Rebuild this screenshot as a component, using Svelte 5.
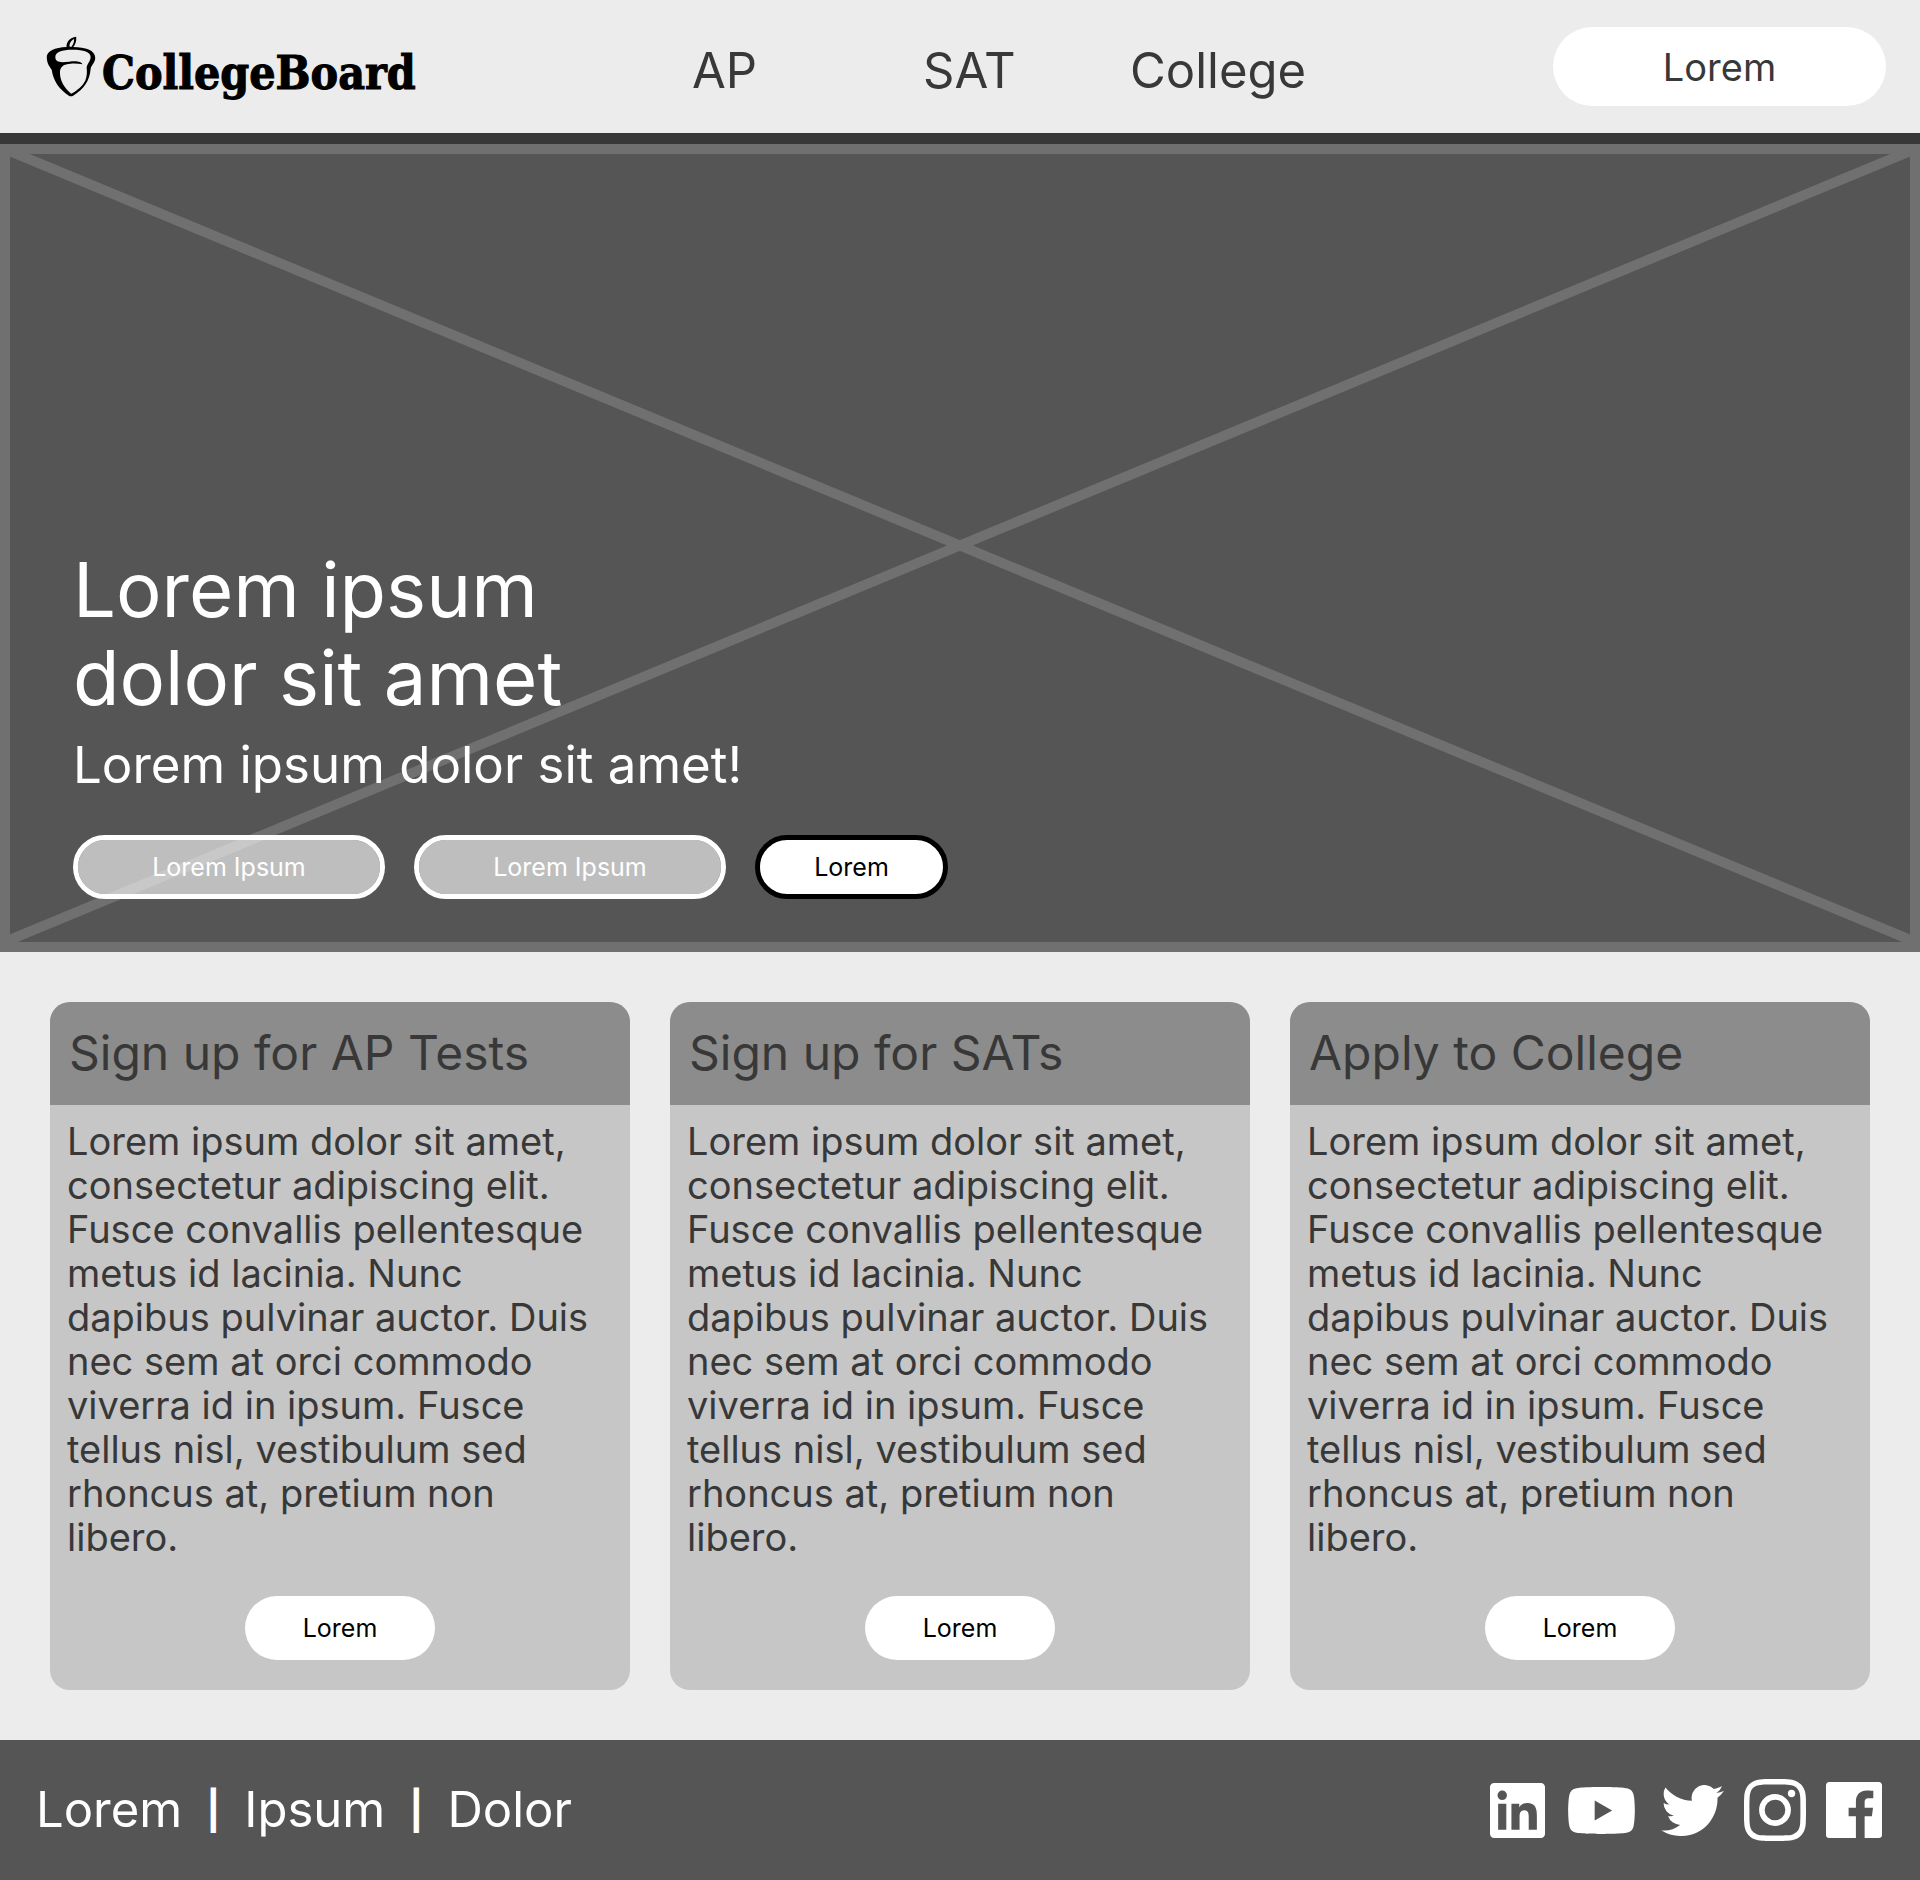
<script>
  const navLinks = ['AP', 'SAT', 'College'];
  const cards = ['Sign up for AP Tests', 'Sign up for SATs', 'Apply to College'];
  const footerLinks = ['Lorem', 'Ipsum', 'Dolor'];
  const copy =
    'Lorem ipsum dolor sit amet, consectetur adipiscing elit. Fusce convallis pellentesque metus id lacinia. Nunc dapibus pulvinar auctor. Duis nec sem at orci commodo viverra id in ipsum. Fusce tellus nisl, vestibulum sed rhoncus at, pretium non libero.';
</script>

<header class="top">
  <a class="brand" href="#home">
    <svg class="acorn" viewBox="76 76 151 185" aria-hidden="true">
      <path
        fill-rule="evenodd"
        d="M78 142C77 120 103 111 138 109C137 94 148 80 167 78C169 92 164 103 158 109C195 110 225 118 225 142C225 157 213 164 211 176C208 211 192 236 158 257Q151 261 145 257C116 237 98 213 93 178C84 166 79 158 78 142ZM104 140C104 124 124 118 156 118C190 118 211 124 211 140C211 154 200 160 199 173C201 188 199 200 195 211C188 226 172 241 152 251C132 235 118 213 118 187C118 168 130 161 150 160C164 159 176 160 186 162C184 153 166 151 146 154C120 157 104 157 104 140ZM147 108C146 98 153 89 161 85C161 96 157 104 152 109Z"
      />
    </svg>
    <span class="wordmark">CollegeBoard</span>
  </a>
  <nav class="main-nav" aria-label="Main">
    {#each navLinks as link}
      <a href="#{link.toLowerCase()}">{link}</a>
    {/each}
  </nav>
  <button class="pill account">Lorem</button>
</header>

<main>
  <section class="hero">
    <svg class="cross" viewBox="0 0 1920 808" preserveAspectRatio="none" aria-hidden="true">
      <path d="M0 3L1920 800M0 800L1920 3" />
    </svg>
    <div class="hero-content">
      <h1>Lorem ipsum<br />dolor sit amet</h1>
      <p>Lorem ipsum dolor sit amet!</p>
      <div class="actions">
        <button class="pill ghost">Lorem Ipsum</button>
        <button class="pill ghost">Lorem Ipsum</button>
        <button class="pill solid">Lorem</button>
      </div>
    </div>
  </section>

  <section class="cards">
    {#each cards as title}
      <article class="card">
        <h2>{title}</h2>
        <div class="card-body">
          <p>{copy}</p>
          <button class="pill">Lorem</button>
        </div>
      </article>
    {/each}
  </section>
</main>

<footer>
  <nav class="footer-nav" aria-label="Footer">
    {#each footerLinks as link, i}
      {#if i > 0}<span class="divider" aria-hidden="true">|</span>{/if}
      <a href="#{link.toLowerCase()}">{link}</a>
    {/each}
  </nav>
  <div class="social">
    <a href="#linkedin" aria-label="LinkedIn">
      <svg width="55" height="55" viewBox="0 0 24 24">
        <path d="M20.447 20.452h-3.554v-5.569c0-1.328-.027-3.037-1.852-3.037-1.853 0-2.136 1.445-2.136 2.939v5.667H9.351V9h3.414v1.561h.046c.477-.9 1.637-1.85 3.37-1.85 3.601 0 4.267 2.37 4.267 5.455v6.286zM5.337 7.433a2.062 2.062 0 0 1-2.063-2.065 2.064 2.064 0 1 1 2.063 2.065zm1.782 13.019H3.555V9h3.564v11.452zM22.225 0H1.771C.792 0 0 .774 0 1.729v20.542C0 23.227.792 24 1.771 24h20.451C23.2 24 24 23.227 24 22.271V1.729C24 .774 23.2 0 22.222 0h.003z" />
      </svg>
    </a>
    <a class="wide" href="#youtube" aria-label="YouTube">
      <svg width="67" height="47" viewBox="0 3.545 24 16.91">
        <path d="M23.498 6.186a3.016 3.016 0 0 0-2.122-2.136C19.505 3.545 12 3.545 12 3.545s-7.505 0-9.377.505A3.017 3.017 0 0 0 .502 6.186C0 8.07 0 12 0 12s0 3.93.502 5.814a3.016 3.016 0 0 0 2.122 2.136c1.871.505 9.376.505 9.376.505s7.505 0 9.377-.505a3.015 3.015 0 0 0 2.122-2.136C24 15.93 24 12 24 12s0-3.93-.502-5.814zM9.545 15.568V8.432L15.818 12l-6.273 3.568z" />
      </svg>
    </a>
    <a href="#twitter" aria-label="Twitter">
      <svg width="63" height="51" viewBox="0 2.25 24 19.5">
        <path d="M23.953 4.57a10 10 0 01-2.825.775 4.958 4.958 0 002.163-2.723c-.951.555-2.005.959-3.127 1.184a4.92 4.92 0 00-8.384 4.482C7.69 8.095 4.067 6.13 1.64 3.162a4.822 4.822 0 00-.666 2.475c0 1.71.87 3.213 2.188 4.096a4.904 4.904 0 01-2.228-.616v.06a4.923 4.923 0 003.946 4.827 4.996 4.996 0 01-2.212.085 4.936 4.936 0 004.604 3.417 9.867 9.867 0 01-6.102 2.105c-.39 0-.779-.023-1.17-.067a13.995 13.995 0 007.557 2.209c9.053 0 13.998-7.496 13.998-13.985 0-.21 0-.42-.015-.63A9.935 9.935 0 0024 4.59z" />
      </svg>
    </a>
    <a href="#instagram" aria-label="Instagram">
      <svg width="62" height="62" viewBox="0 0 24 24">
        <path fill-rule="evenodd" d="M12 0C8.74 0 8.333.015 7.053.072 5.775.132 4.905.333 4.14.63c-.789.306-1.459.717-2.126 1.384S.935 3.35.63 4.14C.333 4.905.131 5.775.072 7.053.012 8.333 0 8.74 0 12s.015 3.667.072 4.947c.06 1.277.261 2.148.558 2.913.306.788.717 1.459 1.384 2.126.667.666 1.336 1.079 2.126 1.384.766.296 1.636.499 2.913.558C8.333 23.988 8.74 24 12 24s3.667-.015 4.947-.072c1.277-.06 2.148-.262 2.913-.558.788-.306 1.459-.718 2.126-1.384.666-.667 1.079-1.335 1.384-2.126.296-.765.499-1.636.558-2.913.06-1.28.072-1.687.072-4.947s-.015-3.667-.072-4.947c-.06-1.277-.262-2.149-.558-2.913-.306-.789-.718-1.459-1.384-2.126C21.319 1.347 20.651.935 19.86.63c-.765-.297-1.636-.499-2.913-.558C15.667.012 15.26 0 12 0zm0 2.16c3.203 0 3.585.016 4.85.071 1.17.055 1.805.249 2.227.415.562.217.96.477 1.382.896.419.42.679.819.896 1.381.164.422.36 1.057.413 2.227.057 1.266.07 1.646.07 4.85s-.015 3.585-.074 4.85c-.061 1.17-.256 1.805-.421 2.227-.224.562-.479.96-.899 1.382-.419.419-.824.679-1.38.896-.42.164-1.065.36-2.235.413-1.274.057-1.649.07-4.859.07-3.211 0-3.586-.015-4.859-.074-1.171-.061-1.816-.256-2.236-.421-.569-.224-.96-.479-1.379-.899-.421-.419-.69-.824-.9-1.38-.165-.42-.359-1.065-.42-2.235-.045-1.26-.061-1.649-.061-4.844 0-3.196.016-3.586.061-4.861.061-1.17.255-1.814.42-2.234.21-.57.479-.96.9-1.381.419-.419.81-.689 1.379-.898.42-.166 1.051-.361 2.221-.421 1.275-.045 1.65-.06 4.859-.06l.045.03zm0 3.678a6.162 6.162 0 1 0 0 12.324 6.162 6.162 0 0 0 0-12.324zM12 16a4 4 0 1 1 0-8 4 4 0 0 1 0 8zm7.846-10.405a1.441 1.441 0 1 1-2.88 0 1.441 1.441 0 0 1 2.88 0z" />
      </svg>
    </a>
    <a href="#facebook" aria-label="Facebook">
      <svg width="56" height="56" viewBox="0 0 24 24">
        <path d="M22.676 0H1.324C.593 0 0 .593 0 1.324v21.352C0 23.408.593 24 1.324 24h11.494v-9.294H9.689v-3.621h3.129V8.41c0-3.099 1.894-4.785 4.659-4.785 1.325 0 2.464.097 2.796.141v3.24h-1.921c-1.5 0-1.792.721-1.792 1.771v2.311h3.584l-.465 3.63H16.56V24h6.115c.733 0 1.325-.592 1.325-1.324V1.324C24 .593 23.408 0 22.676 0" />
      </svg>
    </a>
  </div>
</footer>

<style>
  :global(body) {
    margin: 0;
    background: #ececec;
    color: #383838;
    font-family: Inter, 'Open Sans', sans-serif;
  }
  a {
    color: inherit;
    text-decoration: none;
  }
  h1,
  h2,
  p {
    margin: 0;
    font-weight: 400;
  }
  .pill {
    box-sizing: border-box;
    width: 190px;
    height: 64px;
    padding: 0;
    border: 0;
    border-radius: 40px;
    background: #fff;
    color: #000;
    font: inherit;
    font-size: 25px;
    cursor: pointer;
  }

  .top {
    display: flex;
    align-items: center;
    height: 133px;
    padding: 0 34px 0 46px;
    border-bottom: 11px solid #383838;
  }
  .brand {
    display: flex;
    align-items: center;
    gap: 6px;
    flex: 0 0 35%;
    color: #000;
  }
  .acorn {
    width: 50px;
    height: 61px;
  }
  .wordmark {
    padding-top: 12px;
    font: bold 46px/60px 'DejaVu Serif Condensed', 'DejaVu Serif', serif;
    -webkit-text-stroke: 1px #000;
  }
  .main-nav {
    display: grid;
    grid-template-columns: 231px 207px auto;
    padding: 8px 0 0 2px;
    font-size: 49px;
    line-height: 60px;
  }
  .account {
    width: 333px;
    height: 79px;
    margin-left: auto;
    color: #383838;
    font-size: 38px;
  }

  .hero {
    position: relative;
    display: flex;
    align-items: flex-end;
    box-sizing: border-box;
    min-height: 808px;
    padding: 0 63px 43px;
    border: 10px solid #707070;
    background: #555;
    color: #fff;
  }
  .cross {
    position: absolute;
    inset: -10px;
    width: calc(100% + 20px);
    height: calc(100% + 20px);
    fill: none;
    stroke: #707070;
    stroke-width: 10;
  }
  .hero-content {
    position: relative;
  }
  h1 {
    font-size: 76px;
    line-height: 88px;
  }
  .hero p {
    margin: 12px 0 38px;
    font-size: 51px;
    line-height: 64px;
  }
  .actions {
    display: flex;
    gap: 29px;
  }
  .ghost {
    width: 312px;
    border: 5px solid #fff;
    background: rgba(255, 255, 255, 0.62);
    background-clip: padding-box;
    color: #fff;
  }
  .solid {
    width: 193px;
    border: 5px solid #000;
  }

  .cards {
    display: grid;
    grid-template-columns: repeat(3, 1fr);
    gap: 40px;
    padding: 50px;
  }
  .card {
    overflow: hidden;
    border-radius: 20px;
    background: #c6c6c6;
  }
  h2 {
    padding: 21px 19px 22px;
    background: #8c8c8c;
    font-size: 48px;
    line-height: 60px;
  }
  .card-body {
    display: flex;
    flex-direction: column;
    align-items: center;
    gap: 37px;
    padding: 14px 30px 30px 17px;
  }
  .card-body p {
    align-self: stretch;
    font-size: 38px;
    line-height: 44px;
  }
  .card-body .pill {
    margin-left: 13px;
  }

  footer {
    display: flex;
    align-items: center;
    justify-content: space-between;
    min-height: 140px;
    padding: 0 38px 0 36px;
    background: #555;
    color: #fff;
  }
  .footer-nav {
    display: flex;
    gap: 24px;
    font-size: 49px;
    line-height: 60px;
  }
  .divider {
    font-size: 38px;
    font-weight: 700;
  }
  .social {
    display: flex;
    align-items: center;
    gap: 20px;
  }
  .wide {
    margin: 0 6px 0 3px;
  }
  .social svg {
    display: block;
    fill: currentColor;
  }
</style>
